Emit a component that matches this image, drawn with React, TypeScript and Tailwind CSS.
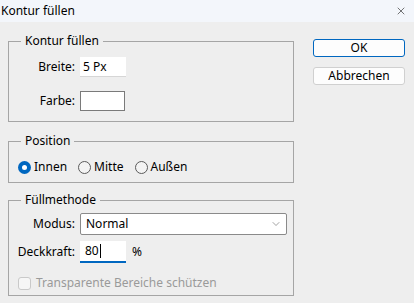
import { ChevronDown, X } from "lucide-react";

const font = { fontFamily: '"Noto Sans", "Open Sans", sans-serif' };

export default function App() {
  return (
    <div
      className="flex h-[303px] w-[414px] flex-col overflow-hidden bg-[#eeeeee] text-[12px] leading-[16px] text-black"
      style={font}
    >
      <TitleBar />
      <div className="flex flex-1 px-[8px]">
        <div className="w-[286px]">
          <KonturGroup />
          <PositionGroup />
          <FuellGroup />
        </div>
        <div className="ml-[19px] flex w-[92px] flex-col pt-[17px]">
          <button className="h-[18px] rounded-[3px] border border-[#0067c0] bg-[#fdfdfd] text-[12px] leading-[16px]">
            OK
          </button>
          <button className="mt-[10px] h-[18px] rounded-[3px] border border-[#d0d0d0] bg-[#fdfdfd] text-[12px] leading-[16px]">
            Abbrechen
          </button>
        </div>
      </div>
    </div>
  );
}

function TitleBar() {
  return (
    <div className="flex h-[22px] items-center justify-between bg-[#f3f6fb] pl-[1px] pr-[7px]">
      <span>Kontur füllen</span>
      <X size={12} strokeWidth={1.2} className="text-[#1a1a1a]" />
    </div>
  );
}

function Group({
  legend,
  className,
  children,
}: {
  legend: string;
  className?: string;
  children: React.ReactNode;
}) {
  return (
    <fieldset className={"border border-[#a5a5a5] " + (className ?? "")}>
      <legend className="ml-[12px] px-[4px] leading-[16px]">{legend}</legend>
      {children}
    </fieldset>
  );
}

function Row({
  label,
  className,
  children,
}: {
  label: string;
  className?: string;
  children: React.ReactNode;
}) {
  return (
    <div className={"flex items-center " + (className ?? "")}>
      <span className="w-[66px] text-right">{label}</span>
      <div className="ml-[5px] flex items-center">{children}</div>
    </div>
  );
}

function KonturGroup() {
  return (
    <Group legend="Kontur füllen" className="mt-[11px] pb-[10px]">
      <Row label="Breite:" className="mt-[8px]">
        <div className="h-[20px] w-[46px] border-b border-[#d6d6d6] bg-white pl-[3px] leading-[20px]">
          5 Px
        </div>
      </Row>
      <Row label="Farbe:" className="mt-[14px]">
        <div className="h-[20px] w-[45px] border border-[#7a7a7a] bg-white" />
      </Row>
    </Group>
  );
}

function Radio({ label, checked }: { label: string; checked?: boolean }) {
  return (
    <div className="flex items-center">
      {checked ? (
        <span className="flex h-[13px] w-[13px] items-center justify-center rounded-full bg-[#0067c0]">
          <span className="h-[5px] w-[5px] rounded-full bg-white" />
        </span>
      ) : (
        <span className="h-[13px] w-[13px] rounded-full border border-[#5a5a5a] bg-[#f3f3f3]" />
      )}
      <span className="ml-[3px]">{label}</span>
    </div>
  );
}

function PositionGroup() {
  return (
    <Group legend="Position" className="mt-[11px] pb-[7px]">
      <div className="mt-[10px] flex items-center gap-[11px] pl-[9px]">
        <Radio label="Innen" checked />
        <Radio label="Mitte" />
        <Radio label="Außen" />
      </div>
    </Group>
  );
}

function FuellGroup() {
  return (
    <Group legend="Füllmethode" className="mt-[9px] pb-[4px]">
      <Row label="Modus:" className="mt-[5px]">
        <div className="flex h-[22px] w-[207px] items-center justify-between rounded-[2px] border border-[#8a8a8a] bg-white pl-[5px] pr-[4px]">
          <span>Normal</span>
          <ChevronDown size={12} strokeWidth={1} className="text-[#444]" />
        </div>
      </Row>
      <Row label="Deckkraft:" className="mt-[6px]">
        <div className="flex h-[22px] w-[46px] items-center border-b-2 border-[#0067c0] bg-white pl-[5px]">
          80<span className="ml-[1px] h-[14px] w-[1px] bg-black" />
        </div>
        <span className="ml-[6px]">%</span>
      </Row>
      <div className="mt-[12px] flex items-center pl-[9px] text-[#9a9a9a]">
        <span className="h-[13px] w-[13px] rounded-[3px] border border-[#c9c9c9] bg-[#f6f6f6]" />
        <span className="ml-[5px]">Transparente Bereiche schützen</span>
      </div>
    </Group>
  );
}
